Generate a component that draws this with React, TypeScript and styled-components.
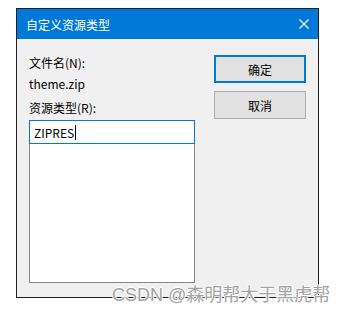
import React, {FC} from "react";
import styled, {createGlobalStyle} from "styled-components";

const GlobalStyle = createGlobalStyle`
  html, body {
    margin: 0;
    padding: 0;
    background: #ffffff;
  }
  body {
    font-family: "Noto Sans CJK SC", "Noto Sans", sans-serif;
  }
`

const Page = styled.div`
  position: relative;
  width: 359px;
  height: 316px;
  padding: 8px 0 0 16px;
  box-sizing: border-box;
`

const Dialog = styled.div`
  width: 303px;
  height: 290px;
  box-sizing: border-box;
  border: 1px solid #1f1f1f;
  background: #f0f0f0;
  display: flex;
  flex-direction: column;
`

const TitleBar = styled.div`
  height: 30px;
  background: #0078d7;
  color: #ffffff;
  display: flex;
  align-items: center;
  justify-content: space-between;
  padding: 0 9px 0 9px;
  font-size: 12px;
`

const CloseIcon = styled.svg`
  width: 10px;
  height: 10px;
  margin-right: 0;
`

const Body = styled.div`
  display: flex;
  padding: 16px 0 0 12px;
  gap: 19px;
`

const LeftColumn = styled.div`
  width: 166px;
  display: flex;
  flex-direction: column;
`

const Label = styled.div<{$top: number}>`
  margin-top: ${p => p.$top}px;
  font-size: 12px;
  line-height: 16px;
  color: #000000;
`

const TextBox = styled.div`
  margin-top: 4px;
  height: 24px;
  box-sizing: border-box;
  border: 1px solid #0078d7;
  background: #ffffff;
  display: flex;
  align-items: center;
  padding-left: 4px;
  font-size: 12px;
  color: #000000;
`

const Caret = styled.span`
  display: inline-block;
  width: 1px;
  height: 15px;
  background: #000000;
  margin-left: 1px;
`

const ListBox = styled.div`
  height: 139px;
  box-sizing: border-box;
  border: 1px solid #828790;
  border-top: none;
  background: #ffffff;
`

const ButtonColumn = styled.div`
  display: flex;
  flex-direction: column;
  gap: 8px;
`

const DialogButton = styled.button<{$default?: boolean}>`
  width: 92px;
  height: 28px;
  box-sizing: border-box;
  background: #e1e1e1;
  border: ${p => p.$default ? "2px solid #0078d7" : "1px solid #adadad"};
  font-family: "Noto Sans CJK SC", "Noto Sans", sans-serif;
  font-size: 12px;
  color: #000000;
  padding: 0;
  margin: 0;
`

const Watermark = styled.div`
  position: absolute;
  left: 112px;
  top: 283px;
  font-family: "Liberation Sans", "Noto Sans CJK SC", sans-serif;
  font-size: 18px;
  line-height: 24px;
  color: #a3a3a3;
  white-space: nowrap;
  text-shadow: 1px 0 0 #fff, -1px 0 0 #fff, 0 1px 0 #fff, 0 -1px 0 #fff;
`

const App: FC = () => {
    return (
        <>
            <GlobalStyle/>
            <Page>
                <Dialog>
                    <TitleBar>
                        <span>自定义资源类型</span>
                        <CloseIcon viewBox="0 0 10 10">
                            <path d="M0.5 0.5 L9.5 9.5 M9.5 0.5 L0.5 9.5" stroke="#ffffff" strokeWidth="1.1" fill="none"/>
                        </CloseIcon>
                    </TitleBar>
                    <Body>
                        <LeftColumn>
                            <Label $top={0}>文件名(N):</Label>
                            <Label $top={5}>theme.zip</Label>
                            <Label $top={8}>资源类型(R):</Label>
                            <TextBox>ZIPRES<Caret/></TextBox>
                            <ListBox/>
                        </LeftColumn>
                        <ButtonColumn>
                            <DialogButton $default={true}>确定</DialogButton>
                            <DialogButton>取消</DialogButton>
                        </ButtonColumn>
                    </Body>
                </Dialog>
                <Watermark>CSDN @森明帮大于黑虎帮</Watermark>
            </Page>
        </>
    )
}

export default App
